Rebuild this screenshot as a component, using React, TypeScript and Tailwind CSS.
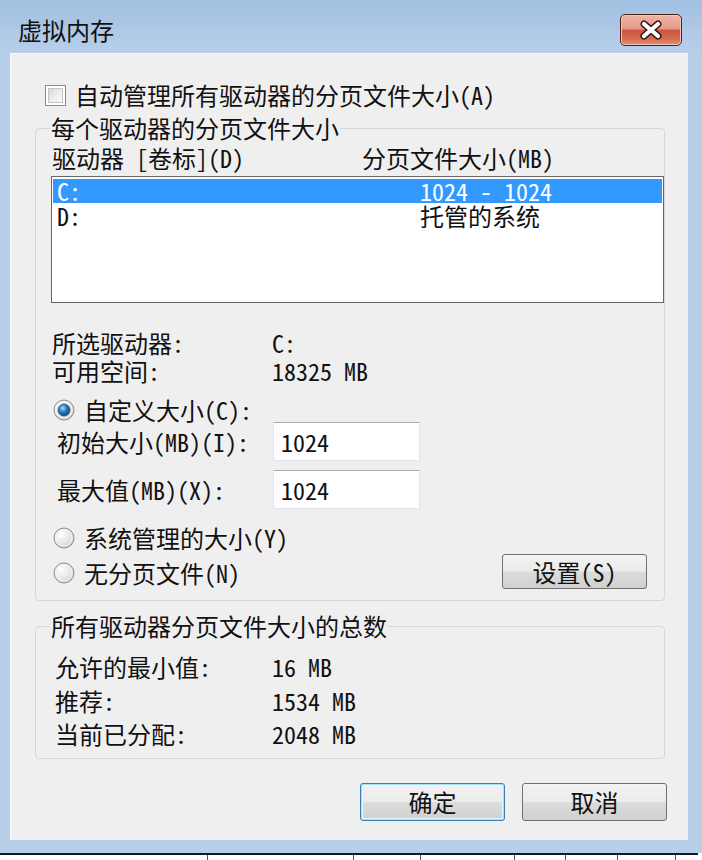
import { useId } from 'react'

const font = "font-['Noto_Sans_CJK_SC',sans-serif] [font-feature-settings:'hwid']"

function Radio({ checked }: { checked?: boolean }) {
  const id = useId().replace(/:/g, '')
  return (
    <svg width="22" height="22" viewBox="0 0 22 22" className="shrink-0">
      <defs>
        <radialGradient id={`r${id}`} cx="0.35" cy="0.3" r="0.8">
          <stop offset="0" stopColor="#ffffff" />
          <stop offset="0.6" stopColor="#e6e6e6" />
          <stop offset="1" stopColor="#c9c9c9" />
        </radialGradient>
        <radialGradient id={`d${id}`} cx="0.4" cy="0.35" r="0.7">
          <stop offset="0" stopColor="#a6dcfa" />
          <stop offset="0.45" stopColor="#2f7fc1" />
          <stop offset="1" stopColor="#0f3f70" />
        </radialGradient>
      </defs>
      <circle cx="11" cy="11" r="10" fill={`url(#r${id})`} stroke="#8c8c8c" strokeWidth="1" />
      <circle cx="11" cy="11" r="8" fill="none" stroke="#f4f4f4" strokeWidth="1" />
      {checked && <circle cx="11" cy="11" r="6" fill={`url(#d${id})`} stroke="#20507e" strokeWidth="0.8" />}
    </svg>
  )
}

function Checkbox() {
  return (
    <div className="w-[21px] h-[21px] shrink-0 border border-[#8c8c8c] bg-white p-[2px]">
      <div className="w-full h-full border border-[#c4c4c4] bg-[linear-gradient(135deg,#d6d6d6_0%,#eeeeee_55%,#fbfbfb_100%)]" />
    </div>
  )
}

const btn =
  'flex items-center justify-center rounded-[3px] border bg-[linear-gradient(to_bottom,#f3f3f3_0%,#ebebeb_48%,#dcdcdc_52%,#d0d0d0_100%)]'

function Field({ value }: { value: string }) {
  return (
    <div className="w-[147px] h-[39px] flex items-center pl-[7px] bg-white border border-[#e3e5ea] border-t-[#a9abb0]">
      {value}
    </div>
  )
}

function InfoRow({ label, value, labelW, mt }: { label: string; value: string; labelW: string; mt: string }) {
  return (
    <div className={`flex h-[24px] ${mt}`}>
      <span className={labelW}>{label}</span>
      <span>{value}</span>
    </div>
  )
}

export default function App() {
  return (
    <div className={`w-[702px] h-[860px] overflow-hidden bg-white text-[24px] leading-[24px] text-[#111] ${font}`}>
      <div className="w-[702px] h-[853px] flex flex-col bg-[#b7cfe9]">
        {/* Title bar */}
        <div className="h-[53px] shrink-0 flex items-start justify-between pl-[18px] pr-[20px] bg-[linear-gradient(to_bottom,#a1bfe1_0%,#afc9e6_60%,#b7cfe9_100%)]">
          <span className="mt-[18px] text-[#101010]">虚拟内存</span>
          <div className="mt-[14px] w-[62px] h-[32px] rounded-[5px] border border-[#4a2218] p-[1px] bg-[#f3c4b8]">
            <div className="w-full h-full rounded-[3px] flex items-center justify-center bg-[linear-gradient(to_bottom,#eeb3a4_0%,#e39a88_45%,#cc563d_52%,#d46a4f_80%,#e08a6a_100%)]">
              <svg width="30" height="20" viewBox="0 0 30 20">
                <path d="M8 4 L22 16 M22 4 L8 16" stroke="#3b1a12" strokeWidth="7" strokeLinecap="round" />
                <path d="M8 4 L22 16 M22 4 L8 16" stroke="#ffffff" strokeWidth="4.2" strokeLinecap="round" />
              </svg>
            </div>
          </div>
        </div>

        <div className="pl-[10px] pr-[14px]">
          <div className="h-[787px] flex flex-col bg-[#f0eff0] border-l border-t border-[#f8f9fb]">
            {/* Auto manage */}
            <div className="mt-[29px] ml-[34px] flex items-center h-[24px]">
              <Checkbox />
              <span className="ml-[9px]">自动管理所有驱动器的分页文件大小(A)</span>
            </div>

            {/* Group 1 */}
            <fieldset className="mt-[9px] ml-[24px] mr-[23px] border border-[#d5d7da] rounded-[4px]">
              <legend className="ml-[14px] px-[1px]">每个驱动器的分页文件大小</legend>
              <div className="mt-[6px] pl-[16px] flex h-[24px]">
                <span className="w-[310px]">驱动器 [卷标](D)</span>
                <span>分页文件大小(MB)</span>
              </div>
              <div className="mt-[6px] ml-[15px] h-[127px] bg-white border border-[#666] pt-[2px] px-[1px]">
                <div className="h-[24px] flex bg-[#3399ff] text-white pl-[4px]">
                  <span className="w-[363px]">C:</span>
                  <span>1024 - 1024</span>
                </div>
                <div className="h-[24px] flex pl-[4px] mt-[1px]">
                  <span className="w-[363px]">D:</span>
                  <span>托管的系统</span>
                </div>
              </div>

              <div className="pl-[16px]">
                <InfoRow label="所选驱动器:" value="C:" labelW="w-[220px]" mt="mt-[28px]" />
                <InfoRow label="可用空间:" value="18325 MB" labelW="w-[220px]" mt="mt-[4px]" />
              </div>

              <div className="mt-[15px] pl-[17px] flex items-center h-[24px]">
                <Radio checked />
                <span className="ml-[9px]">自定义大小(C):</span>
              </div>
              <div className="pl-[21px] flex items-center h-[39px]">
                <span className="w-[216px]">初始大小(MB)(I):</span>
                <Field value="1024" />
              </div>
              <div className="mt-[9px] pl-[21px] flex items-center h-[39px]">
                <span className="w-[216px]">最大值(MB)(X):</span>
                <Field value="1024" />
              </div>
              <div className="mt-[17px] pl-[17px] flex items-center h-[24px]">
                <Radio />
                <span className="ml-[9px]">系统管理的大小(Y)</span>
              </div>
              <div className="mt-[4px] mb-[11px] pl-[17px] pr-[17px] flex items-center justify-between h-[35px]">
                <div className="flex items-center mt-[3px]">
                  <Radio />
                  <span className="ml-[9px]">无分页文件(N)</span>
                </div>
                <div className={`${btn} w-[145px] h-[35px] border-[#707070]`}>设置(S)</div>
              </div>
            </fieldset>

            {/* Group 2 */}
            <fieldset className="mt-[13px] ml-[24px] mr-[23px] border border-[#d5d7da] rounded-[4px]">
              <legend className="ml-[14px] px-[1px]">所有驱动器分页文件大小的总数</legend>
              <div className="pl-[19px] pb-[12px]">
                <InfoRow label="允许的最小值:" value="16 MB" labelW="w-[217px]" mt="mt-[17px]" />
                <InfoRow label="推荐:" value="1534 MB" labelW="w-[217px]" mt="mt-[10px]" />
                <InfoRow label="当前已分配:" value="2048 MB" labelW="w-[217px]" mt="mt-[9px]" />
              </div>
            </fieldset>

            {/* Dialog buttons */}
            <div className="mt-[24px] mr-[21px] flex justify-end gap-[17px]">
              <div className={`${btn} w-[145px] h-[38px] border-[#3c7fb1] shadow-[inset_0_0_0_1px_#a8e0f8,inset_0_0_0_2px_#e6f6fd]`}>确定</div>
              <div className={`${btn} w-[145px] h-[38px] border-[#707070]`}>取消</div>
            </div>
          </div>
        </div>
      </div>

      {/* Window edge and what lies below */}
      <div className="h-[2px] w-[698px] bg-[#141a22]" />
      <div className="h-[5px] flex">
        <div className="w-[208px] border-r border-[#555]" />
        <div className="w-[146px] border-r border-[#555]" />
        <div className="w-[67px] border-r border-[#555]" />
        <div className="w-[94px] border-r border-[#555]" />
        <div className="w-[51px] border-r border-[#555]" />
        <div className="w-[52px] border-r border-[#555]" />
        <div className="w-[58px] border-r border-[#555]" />
      </div>
    </div>
  )
}
